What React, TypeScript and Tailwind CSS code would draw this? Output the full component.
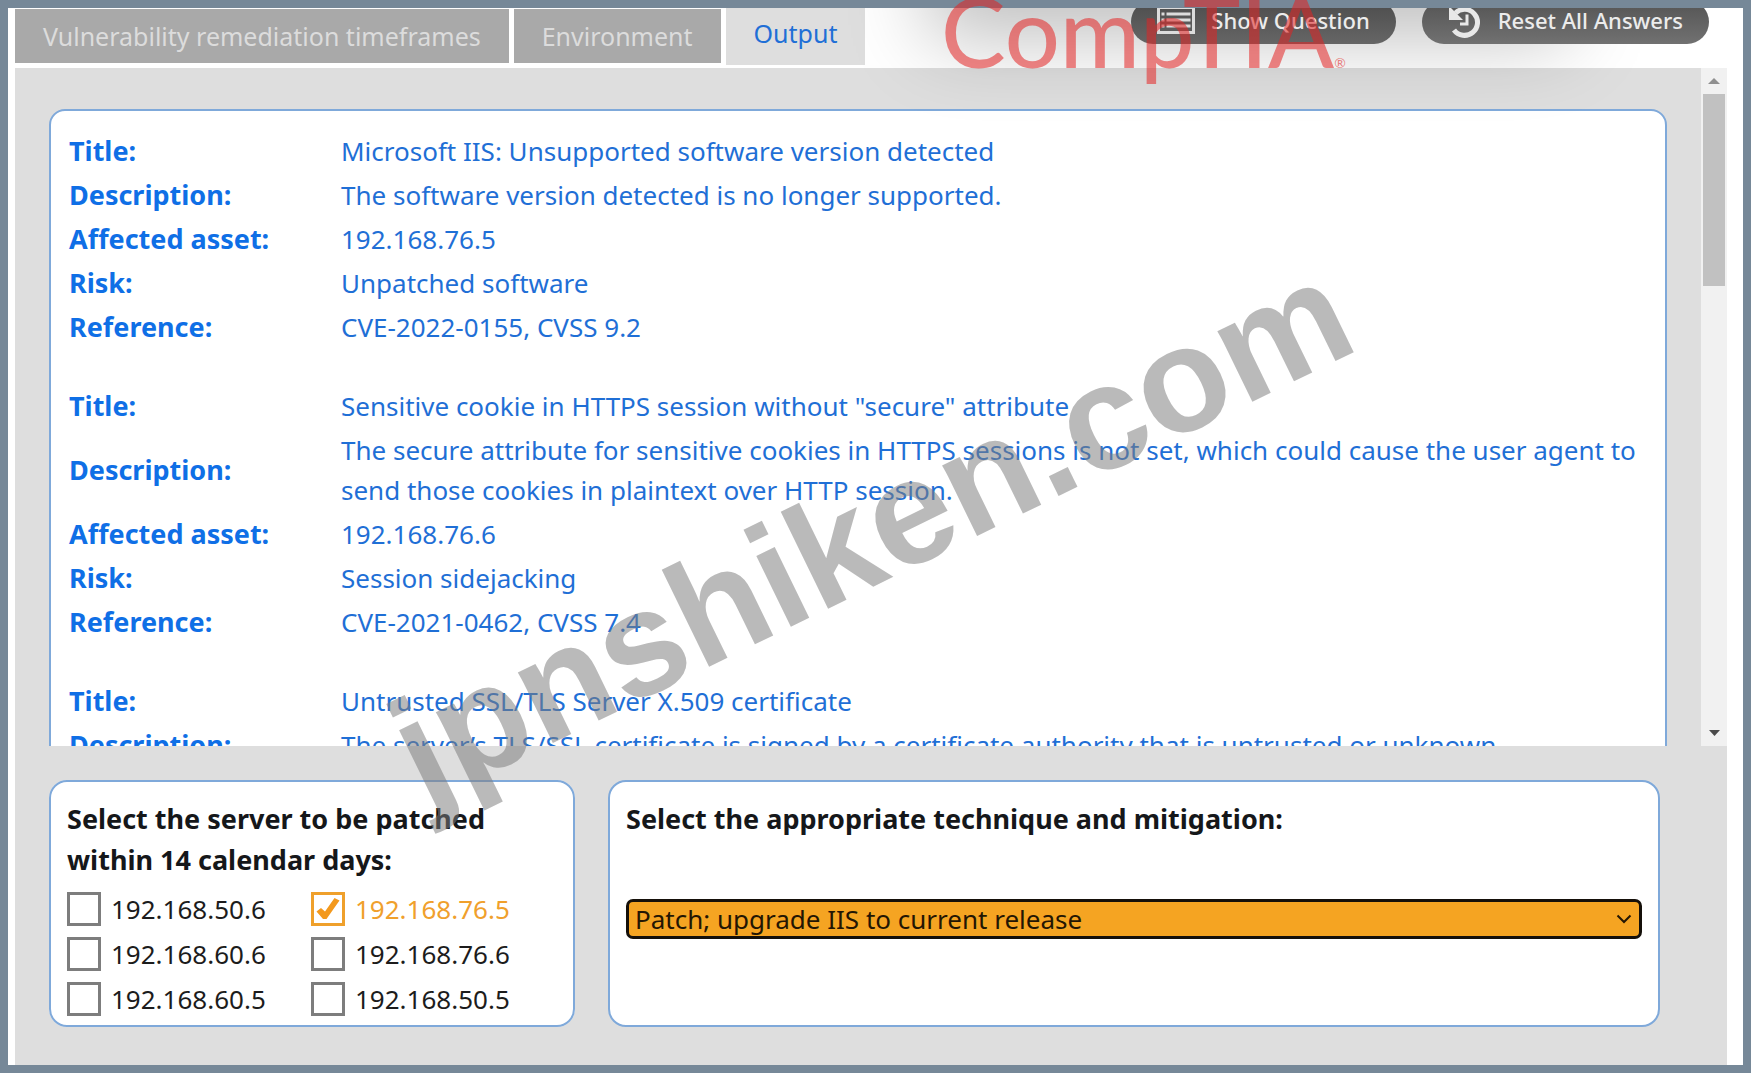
import React, { useState } from "react";

type Finding = {
  title: string;
  description: string;
  asset: string;
  risk: string;
  reference: string;
};

const findings: Finding[] = [
  {
    title: "Microsoft IIS: Unsupported software version detected",
    description: "The software version detected is no longer supported.",
    asset: "192.168.76.5",
    risk: "Unpatched software",
    reference: "CVE-2022-0155, CVSS 9.2",
  },
  {
    title: 'Sensitive cookie in HTTPS session without "secure" attribute',
    description:
      "The secure attribute for sensitive cookies in HTTPS sessions is not set, which could cause the user agent to send those cookies in plaintext over HTTP session.",
    asset: "192.168.76.6",
    risk: "Session sidejacking",
    reference: "CVE-2021-0462, CVSS 7.4",
  },
  {
    title: "Untrusted SSL/TLS Server X.509 certificate",
    description:
      "The server’s TLS/SSL certificate is signed by a certificate authority that is untrusted or unknown.",
    asset: "",
    risk: "",
    reference: "",
  },
];

const servers = [
  "192.168.50.6",
  "192.168.76.5",
  "192.168.60.6",
  "192.168.76.6",
  "192.168.60.5",
  "192.168.50.5",
];

function Row({ label, value }: { label: string; value: string }) {
  return (
    <tr>
      <th scope="row" className="w-[272px] py-[2px] text-left align-middle text-[27px] font-bold text-[#0f6fe6]">
        {label}
      </th>
      <td className="py-[2px] align-middle text-[#1f6fd6]">{value}</td>
    </tr>
  );
}

function FindingRows({ finding }: { finding: Finding }) {
  return (
    <tbody>
      <Row label="Title:" value={finding.title} />
      <Row label="Description:" value={finding.description} />
      {finding.asset && <Row label="Affected asset:" value={finding.asset} />}
      {finding.risk && <Row label="Risk:" value={finding.risk} />}
      {finding.reference && <Row label="Reference:" value={finding.reference} />}
      <tr aria-hidden="true">
        <td colSpan={2} className="h-[35px]" />
      </tr>
    </tbody>
  );
}

function ListIcon() {
  return (
    <svg width="38" height="28" viewBox="0 0 38 28" fill="none" aria-hidden="true">
      <rect x="1.5" y="1.5" width="35" height="25" stroke="#dcdcdc" strokeWidth="3" />
      <path
        d="M4.5 8h3M4.5 14h3M4.5 20h3M9.5 8H33.5M9.5 14H33.5M9.5 20H33.5"
        stroke="#dcdcdc"
        strokeWidth="3"
      />
    </svg>
  );
}

function ResetIcon() {
  return (
    <svg width="34" height="36" viewBox="0 0 34 36" fill="none" aria-hidden="true">
      <path d="M7.5 11A13 13 0 1 1 6 28" stroke="#e8e8e8" strokeWidth="5" />
      <path d="M1 4v14h14z" fill="#e8e8e8" />
      <path d="M19 12.500v9.500H12" stroke="#e8e8e8" strokeWidth="3" />
    </svg>
  );
}

function ServerOption({ name, checked, onChange }: { name: string; checked: boolean; onChange: () => void }) {
  return (
    <label className={checked ? "flex items-center gap-[10px] text-[#f0a02c]" : "flex items-center gap-[10px] text-[#1c1c1c]"}>
      <span className="relative flex size-[34px] shrink-0">
        <input
          type="checkbox"
          checked={checked}
          onChange={onChange}
          className="size-full appearance-none border-[3px] border-[#7d7d7d] bg-white checked:border-[#efa02b]"
        />
        {checked && (
          <svg className="pointer-events-none absolute inset-0" viewBox="0 0 34 34" aria-hidden="true">
            <path d="M5.5 19.5 10 16l4 3.5L23.5 6l5 2.500L15.500 27h-3.500z" fill="#f3991d" />
          </svg>
        )}
      </span>
      <span>{name}</span>
    </label>
  );
}

export default function App() {
  const [selected, setSelected] = useState<string[]>(["192.168.76.5"]);
  const toggle = (name: string) =>
    setSelected((cur) => (cur.includes(name) ? cur.filter((n) => n !== name) : [...cur, name]));

  return (
    <div className="relative h-screen overflow-hidden">
      <div className="relative flex h-full flex-col overflow-hidden border-8 border-[#768898] bg-white pr-4 pl-[7px] font-['Noto_Sans',sans-serif] text-[26px] leading-10">
        <header className="flex h-[60px] shrink-0 items-start justify-between overflow-hidden">
          <nav className="flex gap-[5px] text-[25px]" aria-label="Sections">
            <button type="button" className="mt-px h-[54px] bg-[#a9a9a9] px-7 text-[#dcdcdc]">
              Vulnerability remediation timeframes
            </button>
            <button type="button" className="mt-px h-[54px] bg-[#a9a9a9] px-7 text-[#dcdcdc]">
              Environment
            </button>
            <button type="button" aria-current="page" className="h-[57px] bg-[#dedede] px-7 pb-2 text-[#1f6fd6]">
              Output
            </button>
          </nav>
          <div className="-mt-2 mr-[18px] flex gap-[26px] text-[22px] font-medium text-[#ececec] [text-shadow:0_2px_2px_#333]">
            <button
              type="button"
              className="relative z-10 flex h-11 items-center gap-4 rounded-full bg-linear-to-b from-[#4c4c4c] to-[#666] px-[26px] pb-1"
            >
              <ListIcon />
              Show Question
            </button>
            <button
              type="button"
              className="relative z-10 flex h-11 items-center gap-4 rounded-full bg-linear-to-b from-[#545454] to-[#717171] px-[26px] pb-1"
            >
              <ResetIcon />
              Reset All Answers
            </button>
          </div>
        </header>

        <main className="flex min-h-0 flex-1 flex-col bg-[#dedede]">
          <section className="flex min-h-0 flex-1">
            <div className="min-w-0 flex-1 overflow-hidden px-[34px] pt-[41px]">
              <div className="rounded-2xl border-2 border-[#7fa9da] bg-white px-[18px] pt-[18px]">
                <table className="w-full border-collapse">
                  {findings.map((f) => (
                    <FindingRows key={f.title} finding={f} />
                  ))}
                </table>
              </div>
            </div>
            <div className="flex w-[26px] shrink-0 flex-col items-center justify-between bg-[#f1f1f1]" aria-hidden="true">
              <div className="flex flex-col items-center">
                <svg width="26" height="26" viewBox="0 0 26 26">
                  <path d="M7 16h12l-6-6z" fill="#8f8f8f" />
                </svg>
                <div className="h-48 w-[22px] bg-[#c1c1c1]" />
              </div>
              <svg width="26" height="26" viewBox="0 0 26 26">
                <path d="M8 10h11l-5.500 6z" fill="#4a4a4a" />
              </svg>
            </div>
          </section>

          <section className="flex shrink-0 gap-[33px] pt-[34px] pr-[67px] pb-[38px] pl-[34px]">
            <fieldset className="h-[247px] w-[526px] shrink-0 rounded-[18px] border-2 border-[#7fa9da] bg-white px-4 pt-4 text-[#15171a]">
              <h2 className="text-[27px] leading-[41px] font-bold">
                Select the server to be patched
                <br />
                within 14 calendar days:
              </h2>
              <div className="mt-3 grid grid-cols-[244px_1fr] gap-y-[11px] leading-[34px]">
                {servers.map((s) => (
                  <ServerOption key={s} name={s} checked={selected.includes(s)} onChange={() => toggle(s)} />
                ))}
              </div>
            </fieldset>
            <div className="min-w-0 flex-1 rounded-[18px] border-2 border-[#7fa9da] bg-white px-4 pt-4 text-[#15171a]">
              <label htmlFor="mitigation" className="block text-[27px] leading-[41px] font-bold">
                Select the appropriate technique and mitigation:
              </label>
              <div className="relative mt-[60px]">
                <select
                  id="mitigation"
                  className="block h-10 w-full appearance-none rounded-[7px] border-[3px] border-[#15100a] bg-[#f5a422] pl-1.5 leading-[34px] text-[#241603]"
                >
                  <option>Patch; upgrade IIS to current release</option>
                </select>
                <svg
                  className="pointer-events-none absolute top-3 right-2.5"
                  width="16"
                  height="16"
                  viewBox="0 0 16 16"
                  fill="none"
                  aria-hidden="true"
                >
                  <path d="M1.5 4.5 8 11l6.500-6.500" stroke="#241603" strokeWidth="2" />
                </svg>
              </div>
            </div>
          </section>
        </main>

        <div
          className="pointer-events-none absolute -top-40 left-[920px] h-40 w-[640px] shadow-[0_30px_80px_rgba(0,0,0,0.25)]"
          aria-hidden="true"
        />
      </div>

      <div className="pointer-events-none absolute -top-[18px] left-[941px] z-20 flex items-baseline font-['Lato',sans-serif] leading-none font-medium text-[#e32222]/55">
        <span className="text-[97px] leading-[97px]">CompTIA</span>
        <span className="text-[14px]">®</span>
      </div>

      <div
        className="pointer-events-none absolute inset-x-0 top-0 bottom-3 z-20 flex items-center justify-center pr-2.5"
        aria-hidden="true"
      >
        <span className="-rotate-[26deg] font-['Liberation_Sans',sans-serif] text-[149px] leading-none font-bold whitespace-nowrap text-[#7c7c7c]/53">
          jpnshiken.com
        </span>
      </div>
    </div>
  );
}
